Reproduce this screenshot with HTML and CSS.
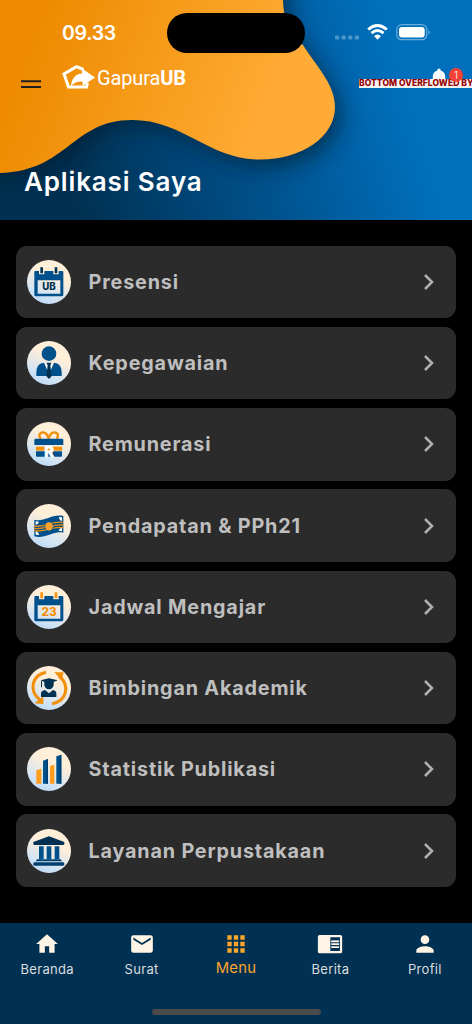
FILE: index.html
```html
<!DOCTYPE html>
<html lang="id">
<head>
<meta charset="utf-8">
<title>Aplikasi Saya</title>
<link rel="stylesheet" href="styles.css">
</head>
<body>
<div class="screen">
  <header class="header">
    <svg class="header-art" viewBox="0 0 472 220">
      <defs>
        <linearGradient id="blue" gradientUnits="userSpaceOnUse" x1="70" y1="170" x2="400" y2="70">
          <stop offset="0" stop-color="#003153"/><stop offset=".5" stop-color="#00508a"/><stop offset="1" stop-color="#0070bd"/>
        </linearGradient>
        <linearGradient id="orange" gradientUnits="userSpaceOnUse" x1="30" y1="50" x2="260" y2="140">
          <stop offset="0" stop-color="#ee8b00"/><stop offset="1" stop-color="#ffab35"/>
        </linearGradient>
        <filter id="soft" x="-20%" y="-20%" width="140%" height="150%"><feGaussianBlur stdDeviation="11"/></filter>
      </defs>
      <rect width="472" height="220" fill="url(#blue)"/>
      <path transform="translate(6 8)" filter="url(#soft)" fill="#001a2e" opacity=".62" d="M-30-30H283V0C283 18 290 32 303 45C316 64 335 84 335 107C335 137 302 159.500 260 159.500C208 159.500 184 120 132 120C72 120 68 171 0 173H-30Z"/>
      <path fill="url(#orange)" d="M0 0H283C283 18 290 32 303 45C316 66 335 84 335 107C335 137 302 159.500 260 159.500C208 159.500 184 120 132 120C72 120 68 171 0 173Z"/>
    </svg>
    <div class="status">
      <span class="time">09.33</span>
      <span class="island"></span>
      <svg class="status-icons" viewBox="0 0 98 20">
        <g fill="#fff" opacity=".3"><rect y="13.500" width="4.200" height="4" rx="1.200"/><rect x="6.600" y="13.500" width="4.200" height="4" rx="1.200"/><rect x="13.200" y="13.500" width="4.200" height="4" rx="1.200"/><rect x="19.800" y="13.500" width="4.200" height="4" rx="1.200"/></g>
        <g fill="none" stroke="#fff" stroke-width="2.900"><path d="M33.200 7.500Q42.500-.6 51.800 7.500"/><path d="M36.500 11.200Q42.500 6 48.500 11.200"/></g>
        <path fill="#fff" d="M39 14Q42.500 11 46 14L42.500 17.800Z"/>
        <rect x="61.800" y="2.700" width="30" height="15" rx="4.800" fill="none" stroke="#fff" stroke-opacity=".42" stroke-width="1.200"/>
        <rect x="64" y="4.900" width="25.700" height="10.500" rx="3" fill="#fff"/><path d="M93.600 8v4.500q2.400-2.200 0-4.500" fill="#fff" opacity=".5"/>
      </svg>
    </div>
    <div class="brand-row">
      <svg class="burger" viewBox="0 0 20 8"><path d="M0 1.200H20M0 6.900H20" stroke="#202020" stroke-width="2"/></svg>
      <svg class="logo" viewBox="0 0 33 24">
        <path fill="none" stroke="#fff" stroke-width="3" d="M21.500 4.500L14.500 1.700L2 9L6.500 22H24.500L25.500 18"/>
        <path fill="#fff" d="M20 3.500L33 12.500L20.500 21V16.500C15.500 16 11.500 18 9 21C9.500 13.500 13.500 9 20 8.500Z"/>
      </svg>
      <span class="brand">Gapura<b>UB</b></span>
      <div class="alert">
        <svg class="bell" viewBox="0 0 14 16"><path fill="#fff" d="M5.400 2.500V2a1.600 1.600 0 0 1 3.200 0v.5C12 3.500 13.200 6 13.200 9v2.200L14 12.500V16H0v-3.500l.8-1.300V9C.8 6 2 3.500 5.400 2.500Z"/></svg>
        <span class="overflow">BOTTOM OVERFLOWED BY</span>
        <span class="badge">1</span>
      </div>
    </div>
    <h1 class="title">Aplikasi Saya</h1>
  </header>

  <svg class="defs" width="0" height="0">
    <defs>
      <linearGradient id="disc" x1=".62" y1=".35" x2=".36" y2=".95"><stop offset="0" stop-color="#ffeed8"/><stop offset=".8" stop-color="#cfe3f6"/><stop offset="1" stop-color="#c3dcf5"/></linearGradient>
      <symbol id="chev" viewBox="0 0 12 18"><path d="M2 2L9 9L2 16" fill="none" stroke="#b0b0b0" stroke-width="2.500"/></symbol>
    </defs>
  </svg>

  <main class="list">
    <a class="card">
      <svg class="icon" viewBox="0 0 132 132"><circle cx="66" cy="66" r="66" fill="url(#disc)"/><path fill="#00508c" fill-rule="evenodd" d="M25 33H36V43H52V33H79V43H95V33H106Q109 33 109 36V104Q109 109 104 109H27Q22 109 22 104V36Q22 33 25 33ZM32 61V101H100V61Z"/><path fill="#003153" d="M40 22h8v18h-8zM83 22h8v18h-8z"/><text x="66" y="91" class="cal ub">UB</text></svg>
      <span class="label">Presensi</span><svg class="chev"><use href="#chev"/></svg>
    </a>
    <a class="card">
      <svg class="icon" viewBox="0 0 132 132"><circle cx="66" cy="66" r="66" fill="url(#disc)"/><g fill="#00508c"><circle cx="66" cy="38" r="22"/><path d="M28 105V92Q29 67 51 65L66 99L81 65Q103 67 104 92V105Z"/></g><path fill="#fff" d="M54 65H78L66 104Z"/><path fill="#003153" d="M58 65H74L70 73L74 106L66 114L58 106L62 73Z"/></svg>
      <span class="label">Kepegawaian</span><svg class="chev"><use href="#chev"/></svg>
    </a>
    <a class="card">
      <svg class="icon" viewBox="0 0 132 132"><circle cx="66" cy="66" r="66" fill="url(#disc)"/><path fill="none" stroke="#f28f08" stroke-width="7" d="M65 50C62 38 54 28 44 32C34 36 36 47 42 50M65 50C68 38 76 28 86 32C96 36 94 47 88 50"/><path fill="#00508c" d="M26 50H105Q109 50 109 54V69H22V54Q22 50 26 50ZM27 88H105V101Q105 104 102 104H30Q27 104 27 101Z"/><path fill="#f28f08" d="M27 74H105V86H27Z"/><text x="66" y="104" class="gift">R</text></svg>
      <span class="label">Remunerasi</span><svg class="chev"><use href="#chev"/></svg>
    </a>
    <a class="card">
      <svg class="icon" viewBox="0 0 132 132"><circle cx="66" cy="66" r="66" fill="url(#disc)"/><path fill="#00508c" d="M22 47C50 56 75 28 109 36V86C80 78 55 106 22 97Z"/><path fill="#fff" d="M26 52L36 53Q34 61 26 62ZM95 39L105 40V51Q96 48 95 39ZM26 92V82Q35 84 36 93ZM105 82V71Q96 73 95 80Z"/><path fill="none" stroke="#f28f08" stroke-width="4" d="M22 66C50 72 74 50 109 55M22 73C50 79 74 58 109 63M22 80C50 86 74 66 109 71"/><circle cx="66" cy="67" r="12.500" fill="#ffa32d"/><path d="M57 57Q48 67 57 77M75 57Q84 67 75 77" fill="none" stroke="#00508c" stroke-width="2"/></svg>
      <span class="label">Pendapatan &amp; PPh21</span><svg class="chev"><use href="#chev"/></svg>
    </a>
    <a class="card">
      <svg class="icon" viewBox="0 0 132 132"><circle cx="66" cy="66" r="66" fill="url(#disc)"/><path fill="#00508c" fill-rule="evenodd" d="M25 33H36V43H52V33H79V43H95V33H106Q109 33 109 36V104Q109 109 104 109H27Q22 109 22 104V36Q22 33 25 33ZM32 61V101H100V61Z"/><path fill="#f99414" d="M40 22h8v18h-8zM83 22h8v18h-8z"/><text x="66" y="94" class="cal day">23</text></svg>
      <span class="label">Jadwal Mengajar</span><svg class="chev"><use href="#chev"/></svg>
    </a>
    <a class="card">
      <svg class="icon" viewBox="0 0 132 132"><circle cx="66" cy="66" r="66" fill="url(#disc)"/><path fill="none" stroke="#f28f08" stroke-width="9" d="M57 19C14 28 5 73 38 101M75 113C120 105 130 58 96 30"/><path fill="#f28f08" d="M22 112L49 91V114ZM82 19H110L104 43Z"/><g fill="#003153"><path d="M41 43L66 37L92 43L80 48V58Q77 70 66 70Q55 70 52 58V48ZM42 45h3v19h-3zM42 93V82Q43 74 54 72L66 82L78 72Q88 74 88 82V93Z"/></g></svg>
      <span class="label">Bimbingan Akademik</span><svg class="chev"><use href="#chev"/></svg>
    </a>
    <a class="card">
      <svg class="icon" viewBox="0 0 132 132"><circle cx="66" cy="66" r="66" fill="url(#disc)"/><path fill="#ff9d1c" d="M28 70L43 65V110H28ZM69 57L82 53V110H69Z"/><path fill="#00508c" d="M48 41L63 36V110H48ZM88 28L103 23V110H88Z"/><path fill="#003f70" d="M58 38L63 36V110H58ZM98 25L103 23V110H98Z"/></svg>
      <span class="label">Statistik Publikasi</span><svg class="chev"><use href="#chev"/></svg>
    </a>
    <a class="card">
      <svg class="icon" viewBox="0 0 132 132"><circle cx="66" cy="66" r="66" fill="url(#disc)"/><path fill="#003153" d="M66 22L112 39V44Q112 48 108 48H23Q19 48 19 44V39Z"/><path fill="#00508c" d="M36 52h14v39H36zM59 52h14v39H59zM83 52h14v39H83z"/><path fill="#003f70" d="M30 91H101L105 97H26Z"/><rect x="19" y="100" width="93" height="10" rx="4" fill="#003f70"/></svg>
      <span class="label">Layanan Perpustakaan</span><svg class="chev"><use href="#chev"/></svg>
    </a>
  </main>

  <nav class="nav">
    <div class="tabs">
      <a class="tab"><svg viewBox="0 0 24 24"><path d="M10 20v-6h4v6h5v-8h3L12 3 2 12h3v8z"/></svg><span>Beranda</span></a>
      <a class="tab"><svg viewBox="0 0 24 24"><path d="M20 4H4c-1.100 0-2 .9-2 2v12c0 1.100.9 2 2 2h16c1.100 0 2-.9 2-2V6c0-1.100-.9-2-2-2zm0 4l-8 5-8-5V6l8 5 8-5v2z"/></svg><span>Surat</span></a>
      <a class="tab active"><svg viewBox="0 0 24 24"><path d="M4 8h4V4H4v4zm6 12h4v-4h-4v4zm-6 0h4v-4H4v4zm0-6h4v-4H4v4zm6 0h4v-4h-4v4zm6-10v4h4V4h-4zm-6 4h4V4h-4v4zm6 6h4v-4h-4v4zm0 6h4v-4h-4v4z"/></svg><span>Menu</span></a>
      <a class="tab"><svg viewBox="0 0 24 24"><path fill-rule="evenodd" d="M2.500 3.700H21.500Q23.200 3.700 23.200 5.400V18.900Q23.200 20.600 21.500 20.600H2.500Q.8 20.600.8 18.900V5.400Q.8 3.700 2.500 3.700ZM12.300 5.800V18.500H21.200V5.800ZM13.200 8.900V10.300H20.400V8.900Z"/><path d="M13.200 8.700H20.400V10.200H13.200ZM13.200 11.400H20.400V12.900H13.200ZM13.200 14.100H20.400V15.600H13.200Z"/></svg><span>Berita</span></a>
      <a class="tab"><svg viewBox="0 0 24 24"><path d="M12 12c2.210 0 4-1.790 4-4s-1.790-4-4-4-4 1.790-4 4 1.790 4 4 4zm0 2c-2.670 0-8 1.340-8 4v2h16v-2c0-2.660-5.330-4-8-4z"/></svg><span>Profil</span></a>
    </div>
    <div class="home-bar"></div>
  </nav>
</div>
</body>
</html>
```
FILE: styles.css
```css
* { box-sizing: border-box; }
body { margin: 0; background: #000; font-family: Inter, "Liberation Sans", sans-serif; }
.screen { width: 472px; height: 1024px; display: flex; flex-direction: column; overflow: hidden; }
.header { position: relative; height: 220px; flex: none; overflow: hidden; color: #fff; }
.header-art { position: absolute; inset: 0; width: 472px; height: 220px; }
.status { position: relative; display: flex; align-items: center; height: 40px; margin-top: 13px; padding-left: 62px; }
.time { width: 105px; font-size: 19.5px; font-weight: 600; line-height: 24px; letter-spacing: -.3px; }
.island { width: 138px; height: 40px; border-radius: 20px; background: #000; }
.status-icons { width: 98px; height: 20px; margin-left: 30px; margin-top: -3px; }
.brand-row { position: relative; display: flex; height: 48px; padding: 12px 0 0 21px; }
.burger { width: 20px; height: 8px; margin-top: 15px; }
.logo { width: 33px; height: 24px; margin-left: 21px; }
.brand { margin-left: 2px; width: 90px; font: 20px/26px Roboto, sans-serif; letter-spacing: -.15px; white-space: nowrap; }
.alert { position: relative; display: flex; flex-direction: column; width: 113px; margin-left: 172px; padding-top: 3px; }
.bell { width: 14px; height: 16px; margin-left: 73px; margin-bottom: -5px; flex: none; }
.overflow { height: 9px; background: #f5f5f5; color: #900; font-size: 8.5px; font-weight: 800; line-height: 9px; letter-spacing: .06px; white-space: nowrap; }
.badge { position: absolute; left: 90px; top: 3px; width: 14px; height: 14px; border-radius: 50%; background: #f44336; font-size: 10px; font-weight: 300; line-height: 14px; text-align: center; }
.title { position: relative; margin: 65px 0 0 24px; font-size: 26px; line-height: 32px; font-weight: 600; letter-spacing: .85px; }
.defs { position: absolute; }
.list { flex: 1; display: flex; flex-direction: column; gap: 8.770px; padding: 25.500px 16px 0; }
.card { display: flex; align-items: center; flex: none; height: 72.500px; padding: 0 21px 0 10.500px; border-radius: 11px; background: #2b2b2b; }
.icon { width: 44px; height: 44px; margin-right: 18px; }
.label { flex: 1; color: #bfbfbf; font-size: 19.800px; font-weight: 650; letter-spacing: .82px; white-space: nowrap; }
.chev { width: 12px; height: 18px; }
.cal { font-family: Inter, sans-serif; font-weight: 800; text-anchor: middle; }
.ub { font-size: 29px; fill: #003153; }
.day { font-size: 35px; fill: #f28f08; }
.gift { font: 800 44px Inter, sans-serif; fill: #fff; stroke: #fff; stroke-width: 2px; text-anchor: middle; }
.nav { height: 101.500px; flex: none; display: flex; flex-direction: column; align-items: center; background: #003153; }
.tabs { display: flex; width: 472px; height: 86px; padding-top: 8px; }
.tab { flex: 1; display: flex; flex-direction: column; align-items: center; color: #ddd; font-size: 13px; line-height: 18px; letter-spacing: .3px; }
.tab svg { width: 26px; height: 26px; fill: #fff4e5; }
.tab span { margin-top: 3px; }
.active { color: #ffa52c; font-size: 14.800px; }
.active svg { fill: #ffa52c; }
.active span { margin-top: 2px; }
.home-bar { width: 169px; height: 6px; border-radius: 3px; background: #4b4b4b; }
```
